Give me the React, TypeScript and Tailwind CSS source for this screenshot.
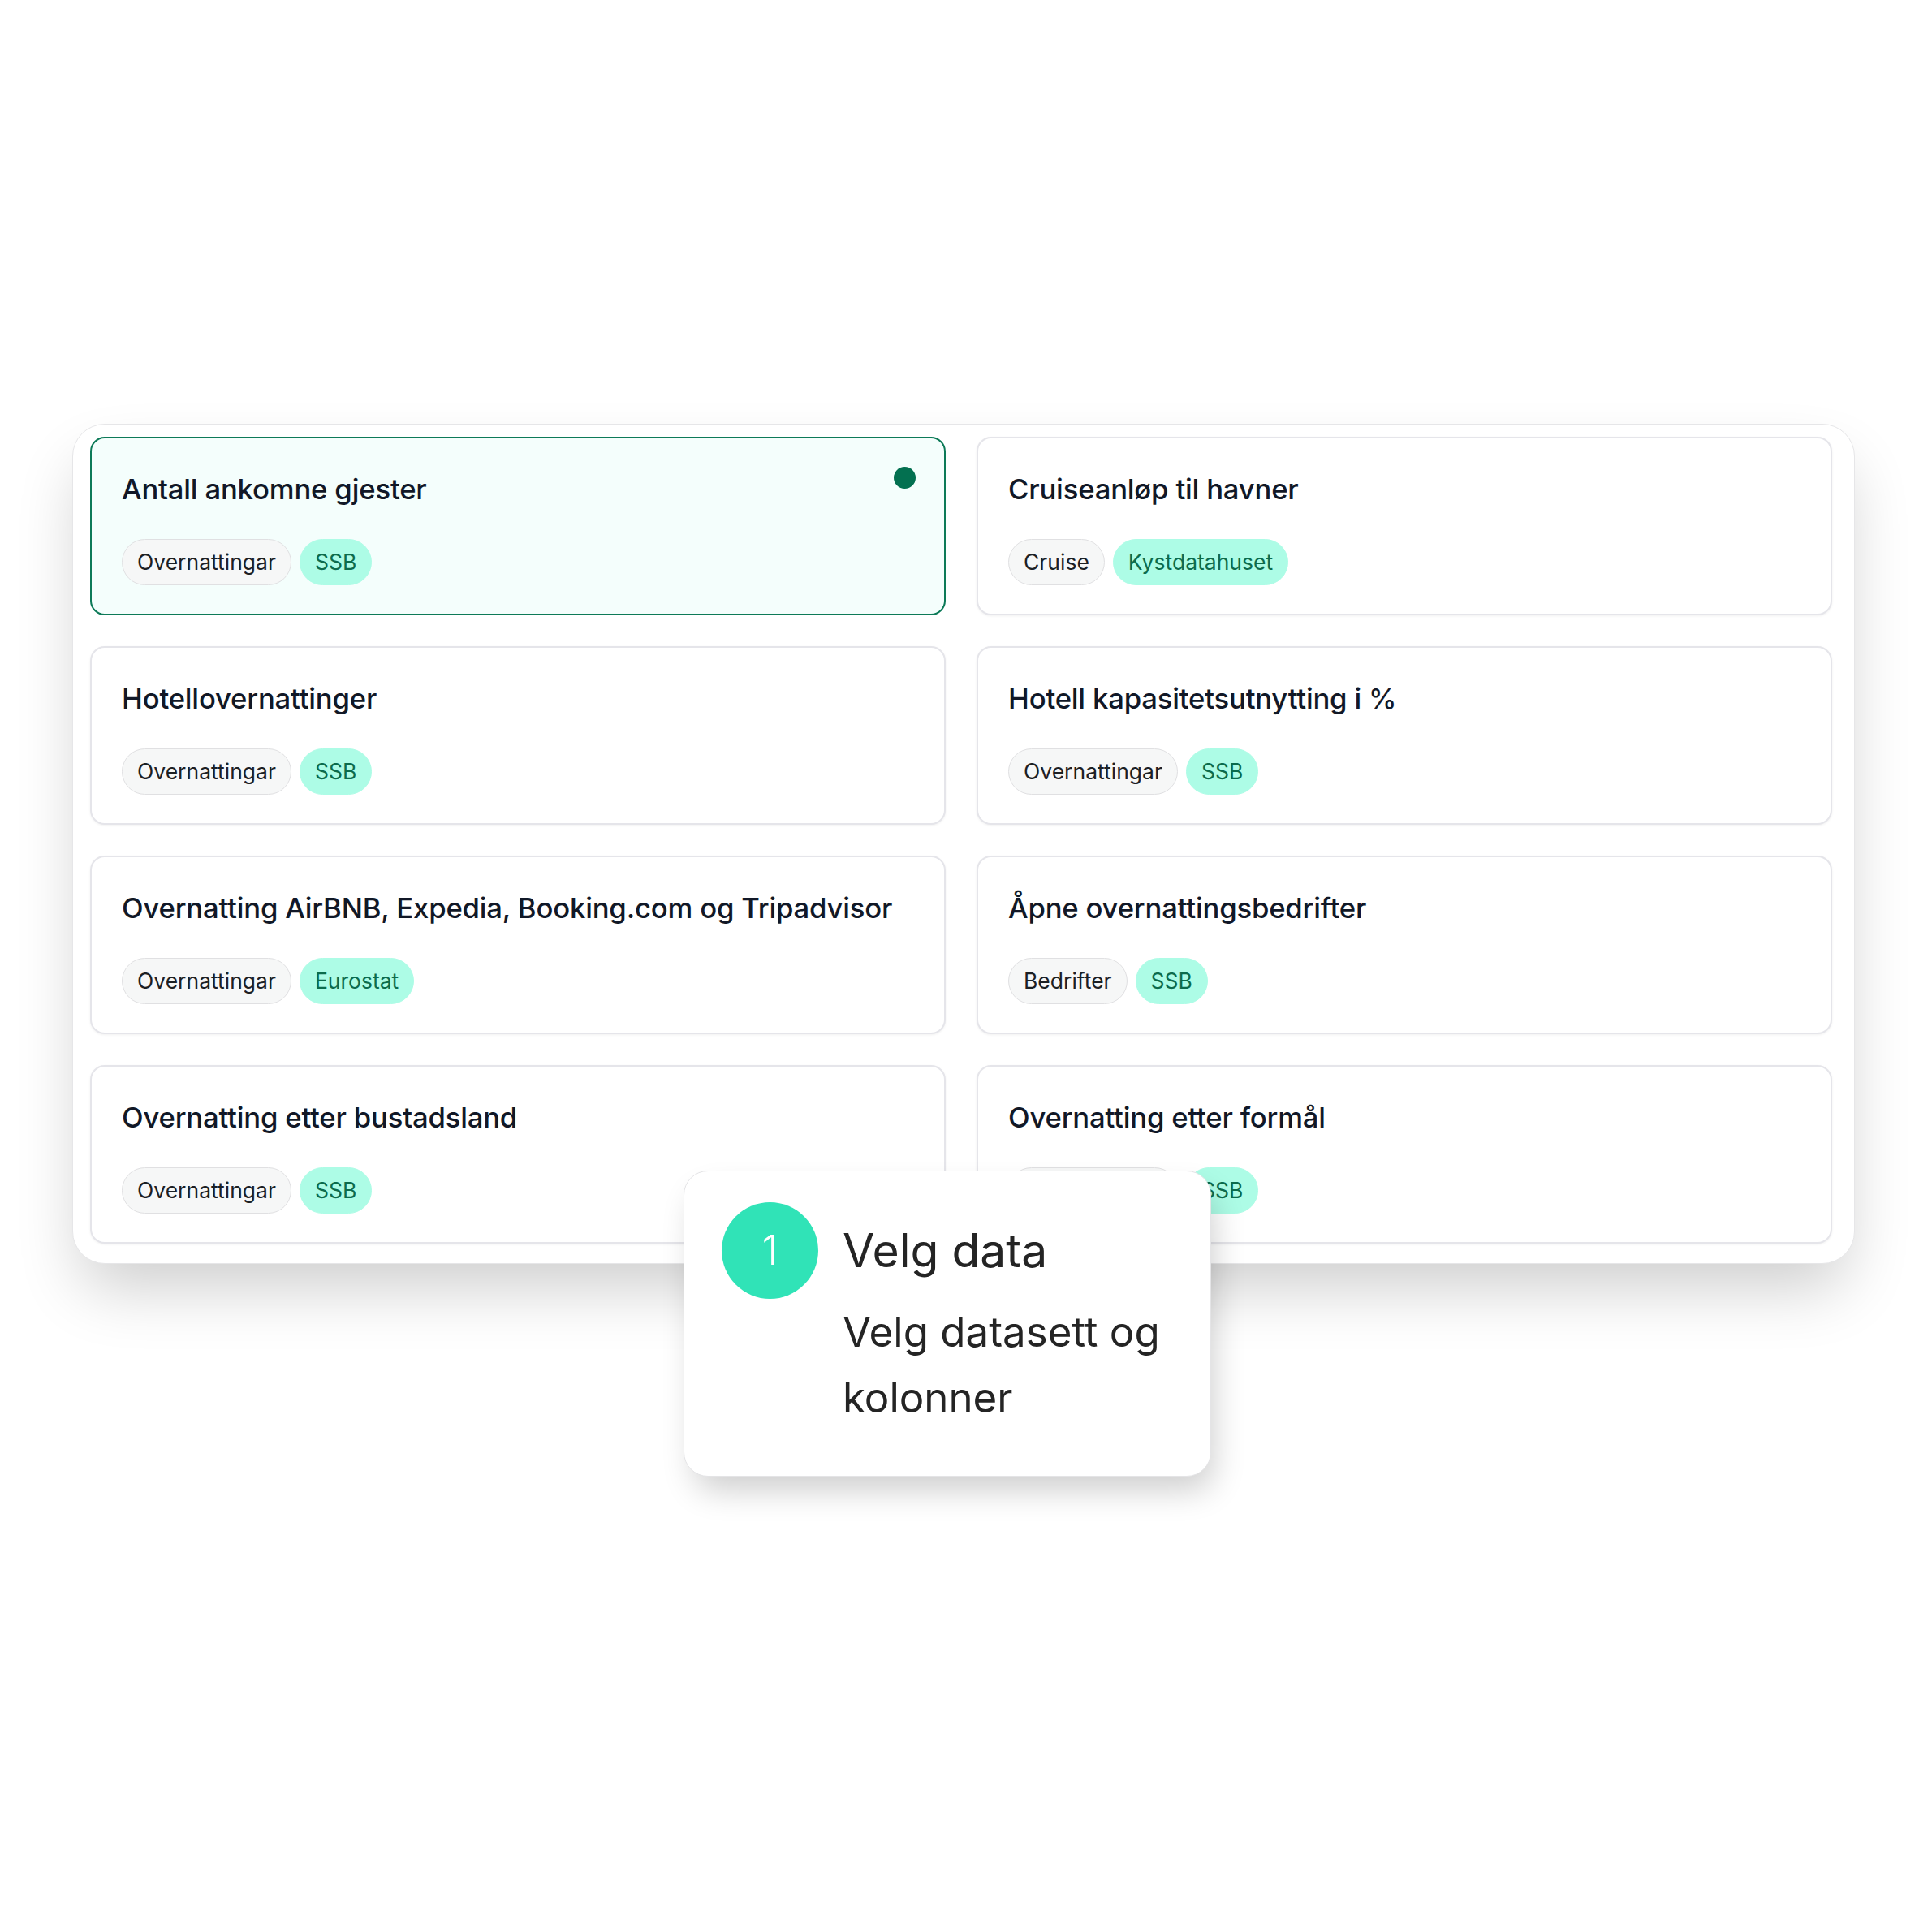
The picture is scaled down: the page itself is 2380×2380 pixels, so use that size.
import React from 'react';

type Dataset = {
  title: string;
  category: string;
  source: string;
  selected?: boolean;
};

const datasets: Dataset[] = [
  { title: 'Antall ankomne gjester', category: 'Overnattingar', source: 'SSB', selected: true },
  { title: 'Cruiseanløp til havner', category: 'Cruise', source: 'Kystdatahuset' },
  { title: 'Hotellovernattinger', category: 'Overnattingar', source: 'SSB' },
  { title: 'Hotell kapasitetsutnytting i %', category: 'Overnattingar', source: 'SSB' },
  { title: 'Overnatting AirBNB, Expedia, Booking.com og Tripadvisor', category: 'Overnattingar', source: 'Eurostat' },
  { title: 'Åpne overnattingsbedrifter', category: 'Bedrifter', source: 'SSB' },
  { title: 'Overnatting etter bustadsland', category: 'Overnattingar', source: 'SSB' },
  { title: 'Overnatting etter formål', category: 'Overnattingar', source: 'SSB' },
];

const DatasetCard: React.FC<{ data: Dataset }> = ({ data }) => (
  <div
    className={`relative h-[220px] rounded-[18px] border-2 px-[37px] pt-[37px] ${
      data.selected
        ? 'border-[#0d7a58] bg-[#f4fefc]'
        : 'border-[#e5e5ea] bg-white shadow-[0_1px_3px_rgba(0,0,0,0.06)]'
    }`}
  >
    {data.selected && (
      <span className="absolute top-[35px] right-[35px] h-[27px] w-[27px] rounded-full bg-[#037050]" />
    )}
    <h3 className="text-[34.7px] leading-[51px] font-medium text-[#111827] tracking-[-0.2px]">{data.title}</h3>
    <div className="mt-[36px] flex gap-[10px]">
      <span className="rounded-full border border-[#e0e0e2] bg-[#f6f7f7] px-[18px] py-[8px] text-[26.5px] leading-[39px] text-[#1c2024]">
        {data.category}
      </span>
      <span className="rounded-full border border-[#adfce6] bg-[#adfce6] px-[18px] py-[8px] text-[26.5px] leading-[39px] text-[#0c6b4c]">
        {data.source}
      </span>
    </div>
  </div>
);

export default function App() {
  return (
    <div className="min-h-[2380px] w-[2380px] bg-white pt-[522px] pl-[89px]" style={{ fontFamily: 'Inter, "Noto Sans", sans-serif' }}>
      <div className="relative w-[2196px] rounded-[40px] border border-[#e6e6e8] bg-white pt-[15px] pb-[24px] pl-[21px] pr-[27px] shadow-[0_40px_80px_-12px_rgba(0,0,0,0.2)]">
        <div className="grid grid-cols-2 gap-[38px]">
          {datasets.map((d) => (
            <DatasetCard key={d.title} data={d} />
          ))}
        </div>

        <div className="absolute left-[752px] top-[919px] w-[650px] rounded-[30px] border border-[#e4e4e6] bg-white pl-[46px] pr-[30px] pt-[38px] pb-[56px] shadow-[8px_22px_40px_-6px_rgba(0,0,0,0.2)]">
          <div className="flex gap-[30px]">
            <div className="flex h-[119px] w-[119px] shrink-0 items-center justify-center rounded-full bg-[#30e3b7] text-[51px] font-light text-white">
              1
            </div>
            <div className="flex-1">
              <div className="flex h-[119px] items-center text-[57px] text-[#242424]">Velg data</div>
              <p className="text-[51px] leading-[81px] text-[#242424]">Velg datasett og kolonner</p>
            </div>
          </div>
        </div>
      </div>
    </div>
  );
}
